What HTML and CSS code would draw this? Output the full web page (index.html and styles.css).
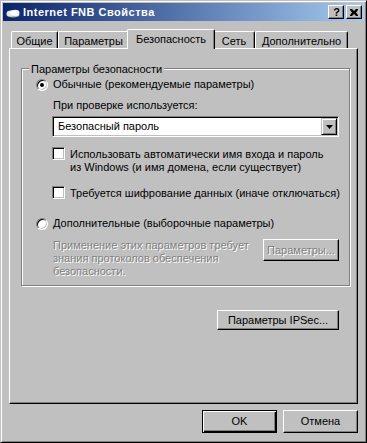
FILE: index.html
```html
<!DOCTYPE html>
<html>
<head>
<meta charset="utf-8">
<link rel="stylesheet" href="styles.css">
</head>
<body>
<div class="window">
  <div class="titlebar">
    <svg class="app-icon" width="16" height="16" viewBox="0 0 16 16">
      <ellipse cx="8" cy="11" rx="6.5" ry="2.5" fill="#a8a8a8"/>
      <ellipse cx="6" cy="9.5" rx="4.5" ry="3" fill="#e8e8e8"/>
      <ellipse cx="10.5" cy="9" rx="4" ry="3.2" fill="#f4f4f4"/>
      <ellipse cx="8" cy="8.5" rx="3" ry="2.2" fill="#ffffff"/>
    </svg>
    <span class="title">Internet FNB Свойства</span>
    <div class="caption-buttons">
      <div class="cbtn help">?</div>
      <div class="cbtn close">
        <svg width="8" height="7" viewBox="0 0 8 7"><path d="M0 0h2l2 2 2-2h2v1l-2 2.5 2 2.5v1h-2l-2-2-2 2h-2v-1l2-2.5-2-2.5z" fill="#000"/></svg>
      </div>
    </div>
  </div>
  <div class="client">
    <div class="tabs">
      <div class="tab t1">Общие</div>
      <div class="tab t2">Параметры</div>
      <div class="tab t3 selected">Безопасность</div>
      <div class="tab t4">Сеть</div>
      <div class="tab t5">Дополнительно</div>
    </div>
    <div class="panel">
      <div class="group">
        <span class="legend">Параметры безопасности</span>
        <div class="option">
          <span class="radio checked"></span>
          <span class="opt-label">Обычные (рекомендуемые параметры)</span>
        </div>
        <div class="indent">
          <div class="field-label">При проверке используется:</div>
          <div class="combo">
            <span class="combo-text">Безопасный пароль</span>
            <span class="combo-btn"><svg width="7" height="4" viewBox="0 0 7 4"><path d="M0 0h7L3.5 4z" fill="#000"/></svg></span>
          </div>
          <div class="check c1">
            <span class="box"></span>
            <span class="check-label">Использовать автоматически имя входа и пароль<br>из Windows (и имя домена, если существует)</span>
          </div>
          <div class="check c2">
            <span class="box"></span>
            <span class="check-label">Требуется шифрование данных (иначе отключаться)</span>
          </div>
        </div>
        <div class="option o2">
          <span class="radio"></span>
          <span class="opt-label">Дополнительные (выборочные параметры)</span>
        </div>
        <div class="indent adv">
          <div class="disabled-text">Применение этих параметров требует<br>знания протоколов обеспечения<br>безопасности.</div>
          <div class="btn disabled adv-btn">Параметры...</div>
        </div>
      </div>
      <div class="ipsec-row">
        <div class="btn ipsec-btn">Параметры IPSec...</div>
      </div>
    </div>
    <div class="footer">
      <div class="btn default dlg-btn">OK</div>
      <div class="btn dlg-btn">Отмена</div>
    </div>
  </div>
</div>
</body>
</html>
```

FILE: styles.css
```css
* { box-sizing: border-box; }
html, body { margin: 0; padding: 0; }
body {
  width: 367px;
  height: 443px;
  overflow: hidden;
  background: #c0c0c0;
  font-family: "Liberation Sans", Arial, sans-serif;
  font-size: 11px;
  line-height: 13px;
  color: #000;
}
.window {
  width: 367px;
  height: 443px;
  background: #c0c0c0;
  border: 1px solid;
  border-color: #c0c0c0 #000 #000 #c0c0c0;
  box-shadow: inset 1px 1px #fff, inset -1px -1px #808080;
  padding: 2px;
  display: flex;
  flex-direction: column;
}
.titlebar {
  height: 18px;
  flex: none;
  display: flex;
  align-items: center;
  background: linear-gradient(to right, #0a246a, #a6caf0);
  padding: 0 2px;
}
.app-icon { flex: none; display: block; }
.title {
  margin-left: 2px;
  color: #fff;
  font-weight: bold;
  font-size: 11px;
  letter-spacing: 0.5px;
  white-space: nowrap;
}
.caption-buttons { margin-left: auto; display: flex; gap: 2px; }
.cbtn {
  width: 16px;
  height: 14px;
  background: #c0c0c0;
  border: 1px solid;
  border-color: #fff #000 #000 #fff;
  box-shadow: inset -1px -1px #808080;
  display: flex;
  align-items: center;
  justify-content: center;
}
.cbtn svg { display: block; }
.help { font-weight: bold; font-size: 11px; line-height: 12px; padding-left: 1px; }

.client {
  flex: 1;
  padding: 8px 6px 0 6px;
  display: flex;
  flex-direction: column;
}
.tabs {
  height: 19px;
  flex: none;
  display: flex;
  align-items: flex-end;
  padding-left: 2px;
}
.tab {
  height: 17px;
  padding-top: 3px;
  text-align: center;
  white-space: nowrap;
  border-top: 1px solid #fff;
  border-left: 1px solid #fff;
  border-right: 1px solid #000;
  box-shadow: inset -1px 0 #808080;
  border-radius: 2px 2px 0 0;
  background: #c0c0c0;
}
.t1 { width: 47px; }
.t2 { width: 71px; }
.t3 { width: 84px; }
.t4 { width: 42px; }
.t5 { width: 93px; }
.tab.selected {
  width: 88px;
  height: 20px;
  margin: 0 -2px -1px -2px;
  position: relative;
  z-index: 1;
}

.panel {
  height: 356px;
  flex: none;
  border: 1px solid;
  border-color: #fff #000 #000 #fff;
  box-shadow: inset -1px -1px #808080;
  padding: 19px 0 0 11px;
}
.group {
  position: relative;
  width: 329px;
  border: 1px solid #808080;
  box-shadow: inset 1px 1px #fff, 1px 1px #fff;
  padding: 9px 0 7px 14px;
}
.legend {
  position: absolute;
  top: -6px;
  left: 7px;
  padding: 0 2px;
  background: #c0c0c0;
  white-space: nowrap;
}
.option {
  display: flex;
  align-items: center;
  height: 13px;
}
.o2 { margin-top: 17px; }
.radio {
  position: relative;
  flex: none;
  width: 12px;
  height: 12px;
  border-radius: 50%;
  background: #fff;
  border: 1px solid;
  border-color: #808080 #fff #fff #808080;
  box-shadow: inset 1px 1px #000, inset -1px -1px #c0c0c0;
}
.radio.checked::after {
  content: "";
  position: absolute;
  left: 3px;
  top: 3px;
  width: 4px;
  height: 4px;
  border-radius: 50%;
  background: #000;
}
.opt-label { margin-left: 5px; white-space: nowrap; }
.indent { margin-left: 16px; width: 287px; }
.field-label { margin: 8px 0 0 1px; }
.combo {
  margin-top: 4px;
  height: 21px;
  display: flex;
  align-items: center;
  background: #fff;
  border: 1px solid;
  border-color: #808080 #fff #fff #808080;
  box-shadow: inset 1px 1px #000, inset -1px -1px #c0c0c0;
  padding: 1px;
}
.combo-text { margin-left: 4px; }
.combo-btn {
  margin-left: auto;
  width: 16px;
  height: 17px;
  background: #c0c0c0;
  border: 1px solid;
  border-color: #c0c0c0 #000 #000 #c0c0c0;
  box-shadow: inset 1px 1px #fff, inset -1px -1px #808080;
  display: flex;
  align-items: center;
  justify-content: center;
}
.combo-btn svg { display: block; }
.check { display: flex; align-items: flex-start; }
.c1 { margin-top: 10px; }
.c2 { margin-top: 12px; }
.box {
  flex: none;
  width: 13px;
  height: 13px;
  background: #fff;
  border: 1px solid;
  border-color: #808080 #fff #fff #808080;
  box-shadow: inset 1px 1px #000, inset -1px -1px #c0c0c0;
}
.check-label { margin: 1px 0 0 5px; white-space: nowrap; }
.adv {
  margin-top: 9px;
  display: flex;
  justify-content: space-between;
  align-items: flex-start;
}
.disabled-text {
  margin-left: 1px;
  color: #808080;
  text-shadow: 1px 1px 0 #fff;
  white-space: nowrap;
}
.btn {
  display: flex;
  align-items: center;
  justify-content: center;
  background: #c0c0c0;
  border: 1px solid;
  border-color: #fff #000 #000 #fff;
  box-shadow: inset -1px -1px #808080;
  white-space: nowrap;
}
.btn.disabled { color: #808080; text-shadow: 1px 1px 0 #fff; }
.adv-btn { width: 76px; height: 22px; flex: none; }
.ipsec-row {
  margin: 24px 18px 0 0;
  display: flex;
  justify-content: flex-end;
}
.ipsec-btn { width: 122px; height: 20px; }
.footer {
  margin-top: 6px;
  display: flex;
  justify-content: flex-end;
  gap: 6px;
}
.dlg-btn { width: 75px; height: 23px; }
.btn.default {
  border: 1px solid #000;
  box-shadow: inset 1px 1px #fff, inset -1px -1px #000, inset -2px -2px #808080;
}
```
